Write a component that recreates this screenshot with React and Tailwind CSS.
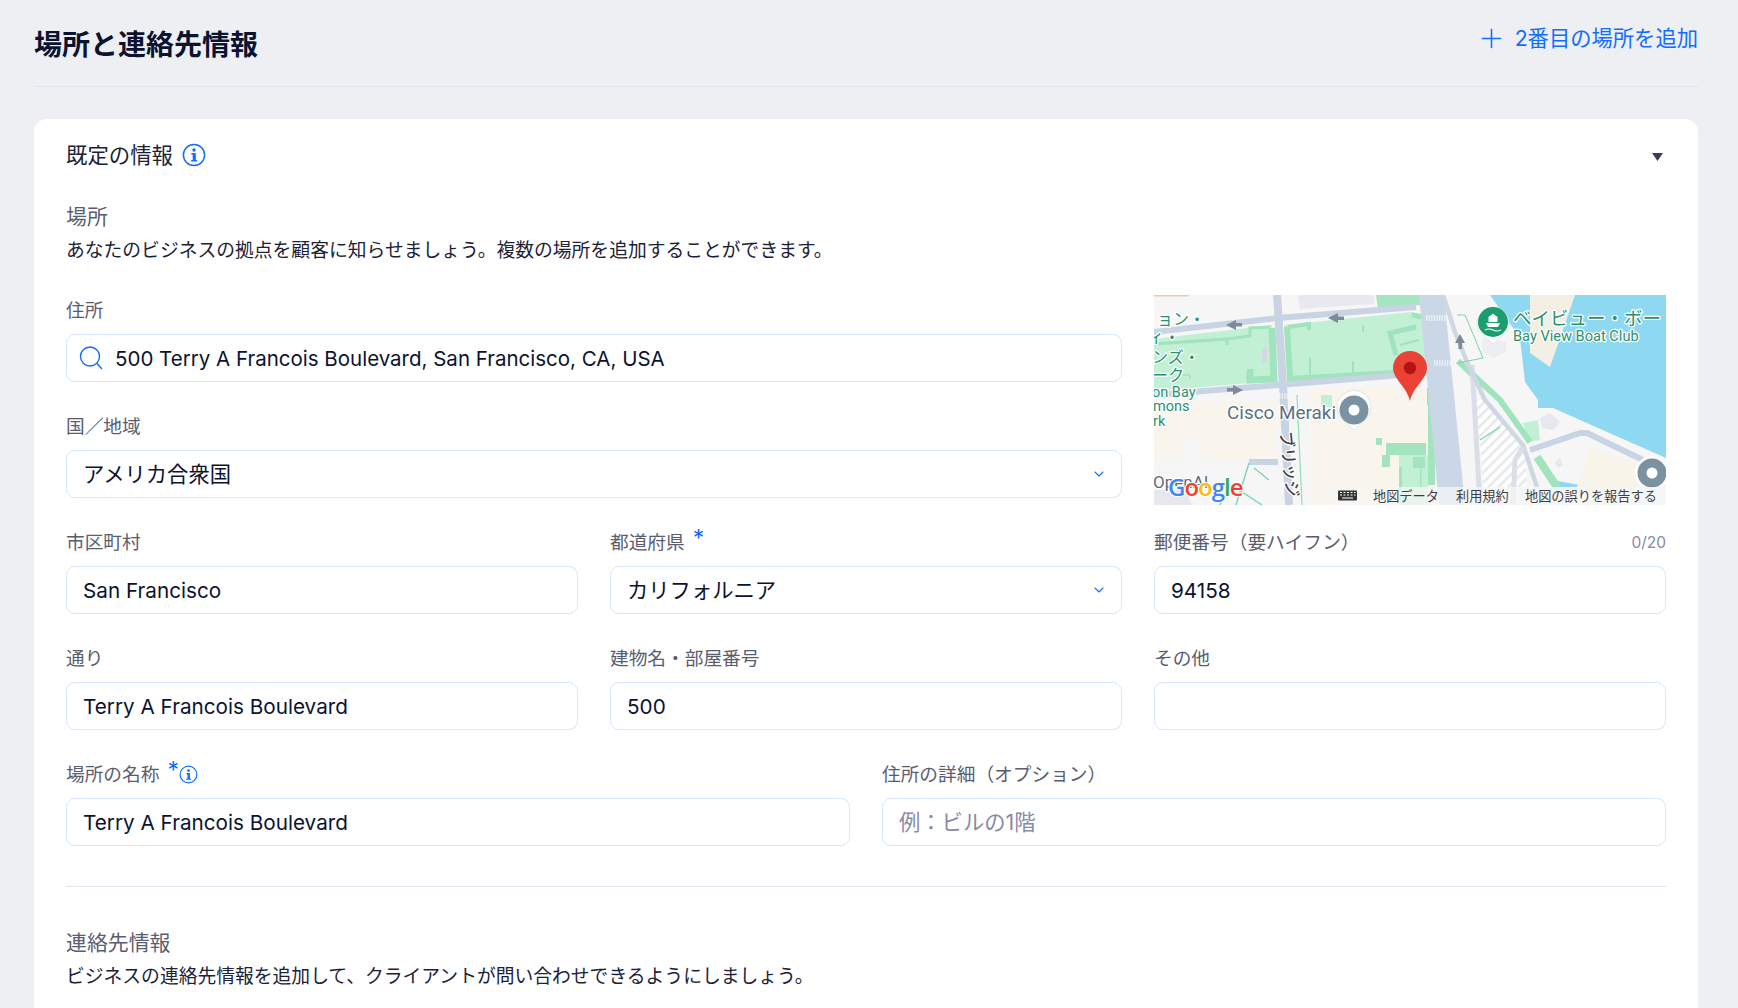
import React from "react";
import { Plus, ChevronDown } from "lucide-react";

const labelCls = "flex items-start h-[27px] mb-3 text-[18.7px] leading-[32px] text-[#595d70]";
const boxCls = "flex items-center h-12 pt-[2px] rounded-[9px] border border-[#d6e6fe] bg-white text-[#0b1330]";

function InfoIcon({ className }) {
  return (
    <svg viewBox="0 0 24 24" className={className} fill="none">
      <circle cx="12" cy="12" r="10.6" stroke="#116dff" strokeWidth="1.5" />
      <circle cx="12" cy="7" r="1.7" fill="#116dff" />
      <path d="M9.4 10h4.4v7h1.3v1.6H9.2V17h1.5v-5.4H9.4z" fill="#116dff" />
    </svg>
  );
}

function Star() {
  return <span className="ml-2 text-[23px] leading-[23px] text-[#116dff]">*</span>;
}

function Field({ label, extra, right, className, children }) {
  return (
    <div className={className}>
      <div className={labelCls}>
        <span>{label}</span>
        {extra}
        {right && <span className="ml-auto text-[15.5px] text-[#868aa5]">{right}</span>}
      </div>
      {children}
    </div>
  );
}

function TextBox({ value, placeholder }) {
  return (
    <div className={boxCls + " px-[16px] text-[20.7px]"}>
      {value || <span className="text-[21.3px] text-[#868aa5]">{placeholder}</span>}
    </div>
  );
}

function SelectBox({ value }) {
  return (
    <div className={boxCls + " justify-between pl-[16px] pr-[14px] text-[21.3px]"}>
      {value}
      <ChevronDown className="-mt-[2px] h-4 w-4 text-[#116dff]" strokeWidth={1.6} />
    </div>
  );
}

function MapPicture() {
  const halo = { paintOrder: "stroke", stroke: "#fff", strokeWidth: 2.5, strokeLinejoin: "round" };
  return (
    <svg viewBox="0 0 512 210" className="block h-[210px] w-[512px] font-[family-name:Roboto,'Noto_Sans_CJK_JP',sans-serif]">
      <defs>
        <pattern id="hatch" width="7" height="7" patternUnits="userSpaceOnUse" patternTransform="rotate(-45)">
          <rect width="7" height="7" fill="#fff" />
          <rect width="7" height="2.5" fill="#e6e8ec" />
        </pattern>
      </defs>
      <rect width="512" height="210" fill="#f6f6f6" />
      <path d="M0 0h35v1.5H0z" fill="#f2c9a8" />

      {/* water and land */}
      <path d="M336 0L366 43L371 87L384 105L384 113H399L512 163V0z" fill="#8ed9f1" />
      <path d="M376 0H421L396 72L376 58z" fill="#f3efe4" />
      <path d="M404 186L436 192H404z" fill="#8ed9f1" />
      <path d="M436 152L483 168L483 192H423z" fill="#f8f4ea" />
      <path d="M386 123L396 118L406 127L399 135L388 133z" fill="#e6e8ee" />
      <path d="M401 167L406 163L409 170L404 173z" fill="#e6e8ee" />
      <path d="M328 43L352 47V57L339 63L328 57z" fill="#eceef2" />

      {/* beige blocks */}
      <path d="M0 106H122V165H0z" fill="#f9f5ec" />
      <path d="M28 142H47V170H28z" fill="#f6f6f6" />
      <path d="M155 93H290V210H158z" fill="#f9f5ec" />
      <path d="M0 195H32L38 210H0z" fill="#e7e8ed" />
      <path d="M144 0H220V9L146 14z" fill="#e8e9ee" />

      {/* parks */}
      <path d="M0 44L118 30L121 86L0 96z" fill="#c1f0d4" />
      <path d="M130 30L258 17L276 22L279 75L134 88z" fill="#c1f0d4" />
      <path d="M222 0H266V10L224 14z" fill="#a5e5c0" />
      <g stroke="#a0e3bc" fill="none">
        <path d="M0 49L72 44" strokeWidth="3" />
        <path d="M73 50V44L96 41V33L116 32" strokeWidth="3" />
        <path d="M118 33L120 84L96 85V74" strokeWidth="7" />
        <path d="M26 84V80H36V84" strokeWidth="1.5" />
        <path d="M133 32L136 84L240 78" strokeWidth="6" />
        <path d="M134 32L155 29V35" strokeWidth="4" />
        <path d="M156 63V80M199 66V78M209 30V37" strokeWidth="2" />
        <path d="M262 32L236 38L242 60M258 20L275 23L278 72" strokeWidth="5" />
        <path d="M246 50L265 45" strokeWidth="2" />
      </g>
      <path d="M108 55L113 52V66L108 68z" fill="#d5d8e3" />
      <path d="M222 143H228V150H222z" fill="#a3e4be" />
      <path d="M232 148H272V160H232z" fill="#a3e4be" />
      <path d="M245 160H274V210H245z" fill="#c1f0d4" />
      <path d="M228 160H236V172H228z" fill="#a3e4be" />
      <path d="M274 105H281V190H274z" fill="#a3e4be" />
      <path d="M273 93H279V110H273z" fill="#a3e4be" />
      <path d="M259 162H271V173H259zM266 173H267.5V192H266zM245 172V210H248V172z" fill="#a3e4be" />
      <path d="M167 100H178V112H167z" fill="#c1f0d4" />
      <path d="M369 128L384 125L386 145L374 147z" fill="#c1f0d4" />

      {/* hatched lot */}
      <path d="M322 105H335L372 160V192H330z" fill="url(#hatch)" />
      <path d="M304 66L346 105L376 147" stroke="#a0e3bc" strokeWidth="6" fill="none" />
      <path d="M383 162L403 192" stroke="#a0e3bc" strokeWidth="8" fill="none" />

      {/* roads */}
      <path d="M265 0H290L311 210H285z" fill="#c9d7e6" />
      <path d="M318 70L326 210" stroke="#d9dee8" strokeWidth="5" fill="none" />
      <path d="M289 0L301 37L313 67L331 105L369 150L383 192" stroke="#cfd7e3" strokeWidth="4.5" fill="none" />
      <path d="M369 152L361 165L359 210" stroke="#d9dee8" strokeWidth="5" fill="none" />
      <path d="M0 37L124 23L262 12" stroke="#c8d4e3" strokeWidth="6" fill="none" />
      <path d="M0 100L272 78" stroke="#c8d4e3" strokeWidth="6" fill="none" />
      <path d="M123 0L129 90L135 210" stroke="#c8d4e3" strokeWidth="8" fill="none" />
      <path d="M95 167H124" stroke="#c8d4e3" strokeWidth="6" fill="none" />
      <path d="M376 155L426 138H433L489 165" stroke="#c8d4e3" strokeWidth="6" fill="none" strokeLinejoin="round" />
      <path d="M272 23H293M280 68H300" stroke="#eef1f5" strokeWidth="6" strokeDasharray="1.3 1.3" fill="none" />
      <path d="M125 101H134" stroke="#eef1f5" strokeWidth="6" strokeDasharray="1.3 1.3" fill="none" />

      {/* thin green paths */}
      <path d="M95 168L82 210M100 173L115 185M85 195L108 210M66 210L75 190" stroke="#79d6a8" strokeWidth="1.4" fill="none" />
      <path d="M143 100L148 210" stroke="#8fdfb3" strokeWidth="1.2" fill="none" />
      <path d="M326 145L346 132" stroke="#79d6a8" strokeWidth="1.4" fill="none" />
      <path d="M303 20H311L329 63L304 68" stroke="#79d6a8" strokeWidth="1" fill="none" />

      {/* one way arrows */}
      <path d="M72 30L82 25V28H88V31.5H82V35z" fill="#7f8a99" />
      <path d="M174 23L184 18V21.5H190V25H184V28z" fill="#7f8a99" />
      <path d="M89 95L79 90V93H73V96.5H79V100z" fill="#7f8a99" />
      <path d="M306 39L301 48H304.5V54H308V48H311z" fill="#7f8a99" />

      {/* labels */}
      <g fill="#2a9070" style={halo}>
        <text x="3" y="30" fontSize="16">ョン・</text>
        <text x="-6" y="48" fontSize="16">ィ・</text>
        <text x="-2" y="68" fontSize="16">ンズ・</text>
        <text x="-2" y="86" fontSize="16">ーク</text>
        <text x="-2" y="102" fontSize="14.5">on Bay</text>
        <text x="-1" y="116" fontSize="14.5">mons</text>
        <text x="-1" y="131" fontSize="14.5">rk</text>
        <text x="359" y="30" fontSize="18.5">ベイビュー・ボー</text>
        <text x="359" y="46" fontSize="14.6">Bay View Boat Club</text>
      </g>
      <text x="73" y="124" fontSize="18.9" fill="#5c7080" style={halo}>Cisco Meraki</text>
      <text x="-1" y="193" fontSize="17" fill="#5f6b75" style={halo}>OpenAI</text>
      <text x="126" y="137" fontSize="16.5" fontWeight="500" fill="#444" transform="rotate(84 126 137)" style={halo}>ブリッジ</text>

      {/* pins */}
      <path d="M339 49L325 36A16 16 0 1 1 353 36z" fill="#fff" stroke="#d4d8dd" strokeWidth="0.6" />
      <circle cx="339" cy="27" r="15" fill="#1a9e6e" />
      <path d="M332 28H346L344 32H334zM334.500 27V22L339 18.500L343.500 22V27z" fill="#fff" />
      <path d="M331 35Q335 33 339 35T347 35" stroke="#fff" strokeWidth="1.2" fill="none" />
      <path d="M200 135L186 122A17 17 0 1 1 214 122z" fill="#fff" stroke="#cfd4da" strokeWidth="0.6" />
      <circle cx="200" cy="115" r="14.5" fill="#7a92a2" />
      <circle cx="200" cy="115" r="5.5" fill="#fff" />
      <circle cx="498" cy="178" r="17" fill="#fff" />
      <circle cx="498" cy="178" r="14.5" fill="#7a92a2" />
      <circle cx="498" cy="178" r="5.5" fill="#fff" />

      {/* marker */}
      <path d="M256 106C253 92 239 84 239 73A17 17 0 0 1 273 73C273 84 259 92 256 106z" fill="#ea4335" />
      <circle cx="256" cy="73" r="6.2" fill="#b31412" />

      {/* google logo */}
      <g fontSize="24" fontWeight="600" fontFamily="'Open Sans',sans-serif" style={{ paintOrder: "stroke", stroke: "#fff", strokeWidth: 2, strokeLinejoin: "round" }}>
        <text x="14" y="201">
          <tspan fill="#4285f4">G</tspan>
          <tspan fill="#ea4335" dx="-1">o</tspan>
          <tspan fill="#fbbc05" dx="-1">o</tspan>
          <tspan fill="#4285f4" dx="-1">g</tspan>
          <tspan fill="#34a853" dx="-1">l</tspan>
          <tspan fill="#ea4335" dx="-1">e</tspan>
        </text>
      </g>

      {/* attribution */}
      <rect x="178" y="192" width="334" height="18" fill="#f5f5f5" fillOpacity="0.75" />
      <path d="M184 196.5a1 1 0 0 1 1-1h17a1 1 0 0 1 1 1v8a1 1 0 0 1-1 1h-17a1 1 0 0 1-1-1z" fill="#333" />
      <path d="M186 197.5h2M189.5 197.5h2M193 197.5h2M196.5 197.5h2M200 197.5h1.5M186 200h2M189.5 200h2M193 200h2M196.5 200h2M200 200h1.5M188 203h11" stroke="#fff" strokeWidth="1.1" />
      <g fontSize="13.2" fill="#3c4043">
        <text x="219" y="205.5">地図データ</text>
        <text x="302" y="205.5">利用規約</text>
        <text x="371" y="205.5">地図の誤りを報告する</text>
      </g>
    </svg>
  );
}

export default function App() {
  return (
    <div className="h-[1008px] overflow-hidden bg-[#edeff3] pl-[34px] pr-[40px] font-[family-name:Inter,'Noto_Sans_CJK_JP',sans-serif]">
      <div className="flex items-start justify-between h-[87px] border-b border-[#dfe5ee]">
        <h1 className="pt-[27px] text-[28px] leading-9 font-bold text-[#0b1330]">場所と連絡先情報</h1>
        <button className="flex items-center gap-2 pt-6 text-[21.3px] leading-7 text-[#116dff]">
          <Plus className="-my-1 h-[31px] w-[31px]" strokeWidth={1.2} />
          2番目の場所を追加
        </button>
      </div>

      <div className="mt-8 rounded-t-[13px] bg-white px-8 pt-[22px] pb-10">
        <div className="flex items-center h-7 text-[21.4px] text-[#1b2238]">
          <span>既定の情報</span>
          <InfoIcon className="ml-[9px] h-6 w-6" />
          <svg viewBox="0 0 11 8" className="ml-auto mt-1 mr-[3px] h-2 w-[11px]">
            <path d="M0 0h11L5.500 8z" fill="#3b3d50" />
          </svg>
        </div>

        <div className="mt-[35px] text-[20.9px] leading-[26px] text-[#595d70]">場所</div>
        <p className="mt-2 text-[18.8px] leading-[26px] text-[#1b2238]">
          あなたのビジネスの拠点を顧客に知らせましょう。複数の場所を追加することができます。
        </p>

        <div className="mt-[31px] grid grid-cols-3 gap-x-8 gap-y-[29px]">
          <div className="col-span-2 flex flex-col gap-[29px]">
            <Field label="住所">
              <div className={boxCls + " gap-[12px] px-[12px] text-[20.5px]"}>
                <svg viewBox="0 0 24 24" className="-mt-[2px] h-6 w-6 shrink-0" fill="none" stroke="#116dff" strokeWidth="1.4">
                  <circle cx="11" cy="10.5" r="9.5" />
                  <path d="M18 17.5l5 5.5" />
                </svg>
                500 Terry A Francois Boulevard, San Francisco, CA, USA
              </div>
            </Field>
            <Field label="国／地域">
              <SelectBox value="アメリカ合衆国" />
            </Field>
          </div>
          <div className="mb-[-7px]">
            <MapPicture />
          </div>

          <Field label="市区町村">
            <TextBox value="San Francisco" />
          </Field>
          <Field label="都道府県" extra={<Star />}>
            <SelectBox value="カリフォルニア" />
          </Field>
          <Field label="郵便番号（要ハイフン）" right="0/20">
            <TextBox value="94158" />
          </Field>

          <Field label="通り">
            <TextBox value="Terry A Francois Boulevard" />
          </Field>
          <Field label="建物名・部屋番号">
            <TextBox value="500" />
          </Field>
          <Field label="その他">
            <TextBox />
          </Field>
        </div>

        <div className="mt-[29px] grid grid-cols-2 gap-x-8">
          <Field label="場所の名称" extra={<><Star /><InfoIcon className="mt-[6px] h-[19px] w-[19px]" /></>}>
            <TextBox value="Terry A Francois Boulevard" />
          </Field>
          <Field label="住所の詳細（オプション）">
            <TextBox placeholder="例：ビルの1階" />
          </Field>
        </div>

        <div className="mt-10 border-t border-[#dfe5ee]" />

        <div className="mt-[43px] text-[20.9px] leading-[26px] text-[#595d70]">連絡先情報</div>
        <p className="mt-2 text-[18.8px] leading-[26px] text-[#1b2238]">
          ビジネスの連絡先情報を追加して、クライアントが問い合わせできるようにしましょう。
        </p>
      </div>
    </div>
  );
}
